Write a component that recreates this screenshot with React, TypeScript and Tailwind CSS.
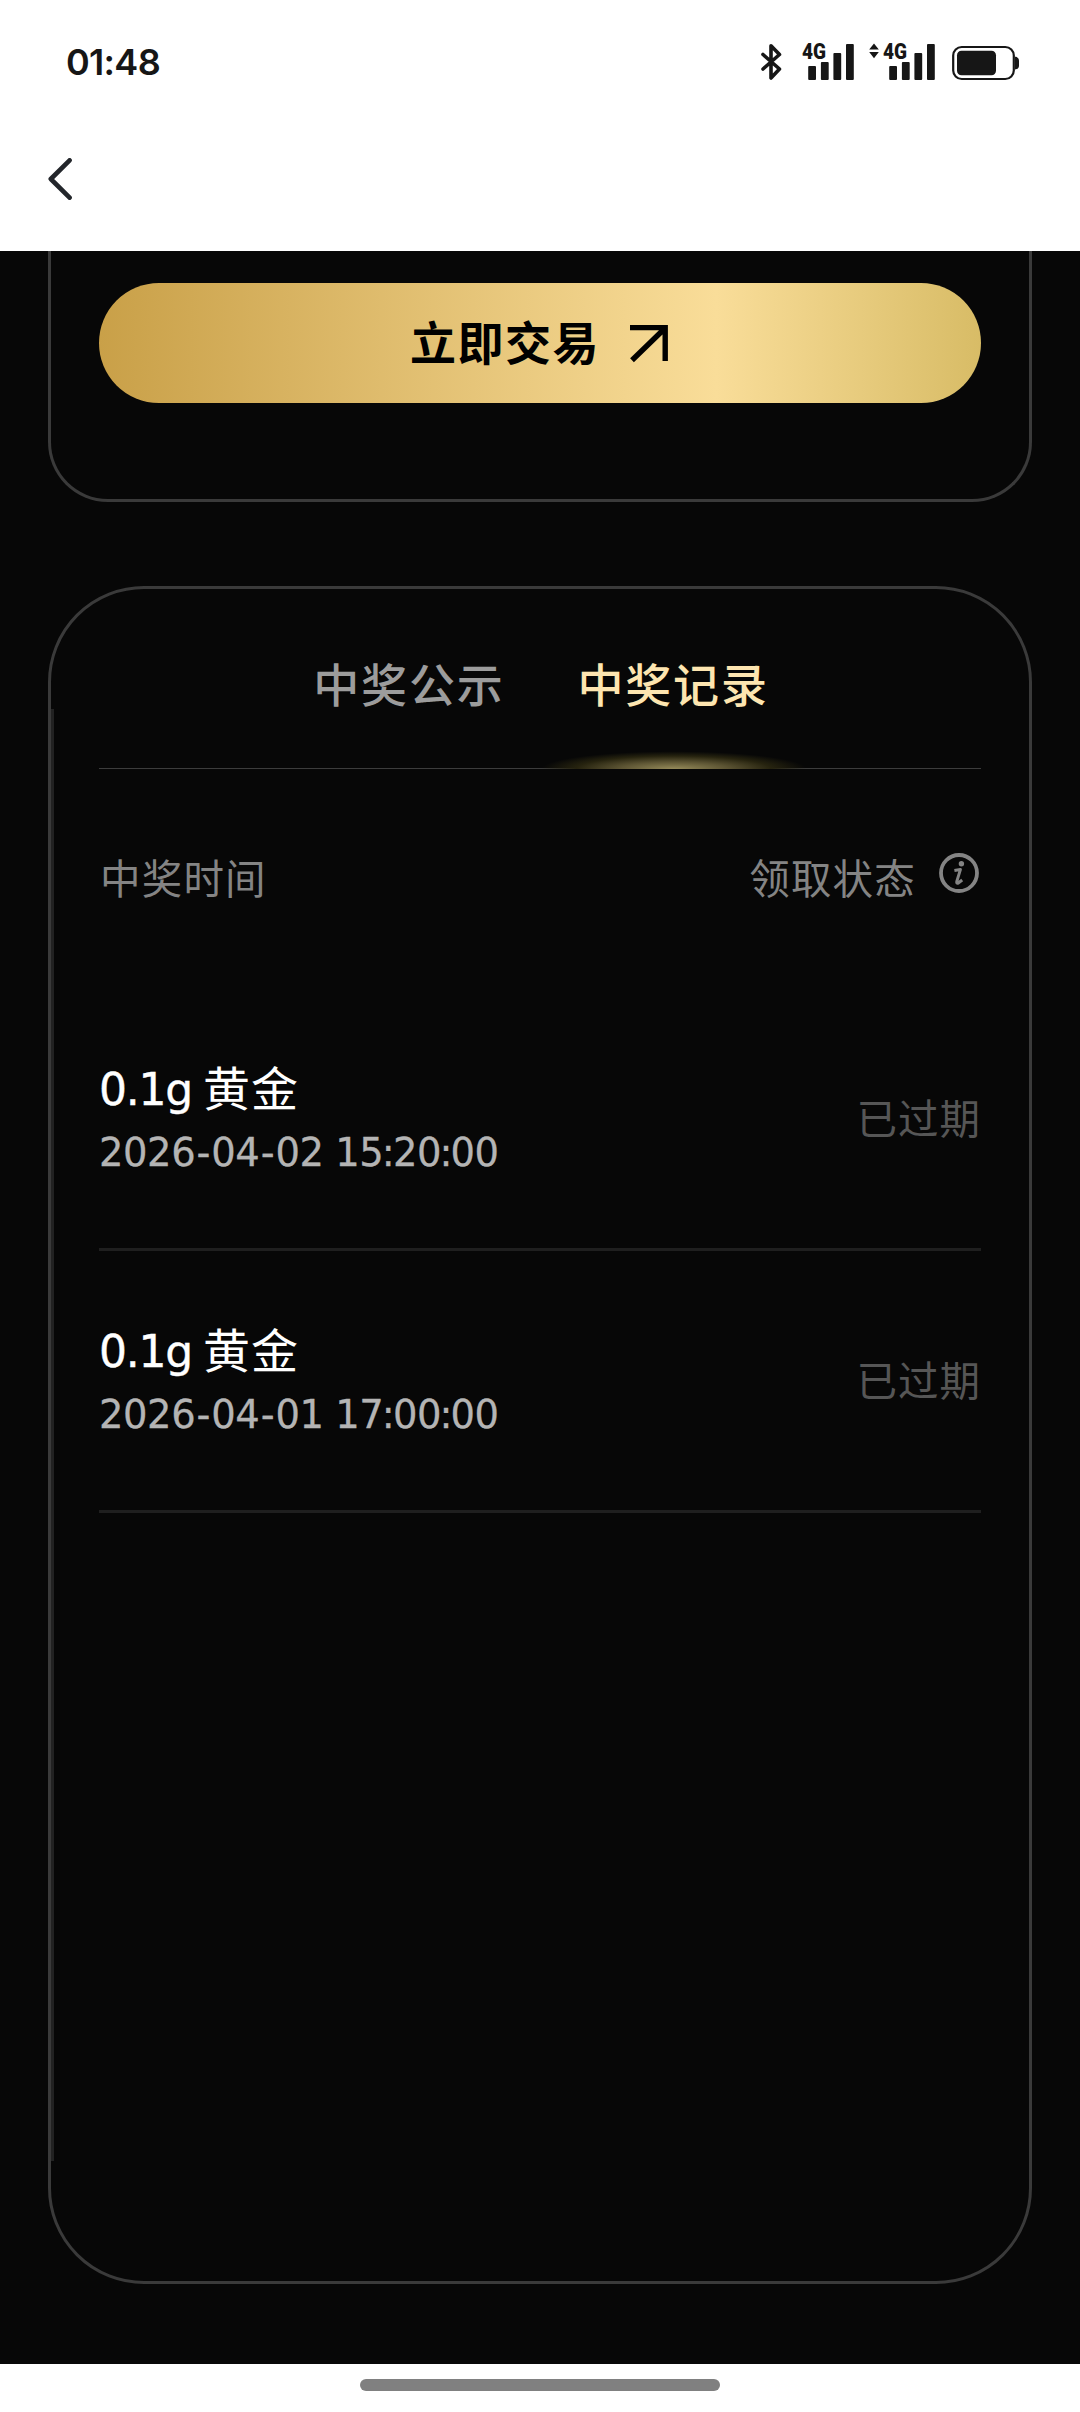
import React from "react";

const CJK = "font-['Noto_Sans_CJK_SC',sans-serif]";
const LATIN = "font-['DejaVu_Sans','Noto_Sans_CJK_SC',sans-serif]";

const records = [
  { amount: "0.1g", name: "黄金", date: ["2026", "04", "02"], clock: ["15", "20", "00"], status: "已过期" },
  { amount: "0.1g", name: "黄金", date: ["2026", "04", "01"], clock: ["17", "00", "00"], status: "已过期" },
];

function BluetoothIcon() {
  return (
    <svg width="22" height="38" viewBox="0 0 22 38" fill="none" stroke="#161616" strokeWidth="3.6" strokeLinejoin="round" strokeLinecap="round">
      <path d="M3 11.5 L19.5 26 L11 35 V2.8 L19.5 11.5 L3 26" />
    </svg>
  );
}

function SignalIcon() {
  return (
    <svg className="overflow-visible" width="54" height="38" viewBox="0 0 54 38" fill="#161616">
      <text x="0" y="16" fontFamily="Roboto, sans-serif" fontWeight="900" fontSize="22" textLength="24" lengthAdjust="spacingAndGlyphs">4G</text>
      <rect x="6.2" y="23" width="7.8" height="14" rx="1" />
      <rect x="18.9" y="19" width="7.8" height="18" rx="1" />
      <rect x="31.4" y="10" width="7.8" height="27" rx="1" />
      <rect x="44" y="1" width="7.8" height="36" rx="1" />
    </svg>
  );
}

function DataArrows() {
  return (
    <svg width="10" height="38" viewBox="0 0 10 38" fill="#161616">
      <path d="M5 0.4 L9.8 6.6 H0.2 Z M5 15.2 L0.2 9 H9.8 Z" />
    </svg>
  );
}

function BatteryIcon() {
  return (
    <svg width="68" height="36" viewBox="0 0 68 36" fill="none">
      <rect x="1.2" y="2" width="60.6" height="32" rx="8.5" stroke="#161616" strokeWidth="2.2" />
      <rect x="5" y="5.8" width="39" height="24.4" rx="4.5" fill="#161616" />
      <path d="M63 11.8 c2.6 0 4 1.6 4 4 v4.6 c0 2.4 -1.4 4 -4 4 Z" fill="#161616" />
    </svg>
  );
}

function StatusBar() {
  return (
    <div className="flex h-[124px] items-center justify-between pl-[66px] pr-[60px]">
      <span className="text-[36px] font-semibold leading-none tracking-[-0.7px] text-[#161616] font-['Inter',sans-serif]">01:48</span>
      <div className="flex h-[38px] items-center">
        <BluetoothIcon />
        <div className="ml-[20px]"><SignalIcon /></div>
        <div className="ml-[13px]"><DataArrows /></div>
        <div className="ml-[4px]"><SignalIcon /></div>
        <div className="ml-[15px] pt-[2px]"><BatteryIcon /></div>
      </div>
    </div>
  );
}

function NavBar() {
  return (
    <div className="flex h-[127px] items-start pl-[45px] pt-[34px]">
      <svg width="30" height="42" viewBox="0 0 30 42" fill="none" stroke="#23262b" strokeWidth="4.6" strokeLinecap="round" strokeLinejoin="round">
        <path d="M24.6 2.3 L5.8 21 L24.6 39.7" />
      </svg>
    </div>
  );
}

function InfoIcon() {
  return (
    <svg width="42" height="42" viewBox="0 0 42 42" fill="none">
      <circle cx="21" cy="21" r="18" stroke="#848484" strokeWidth="3.8" />
      <circle cx="23.4" cy="11.8" r="2.7" fill="#848484" />
      <path d="M16.4 18.6 L22.4 17.6 L18.8 29.4 Q18.2 32 20.6 30.8 L24.2 28" stroke="#848484" strokeWidth="3" strokeLinejoin="round" />
    </svg>
  );
}

/* Date and clock with widened hyphens and tightened colons. */
function Timestamp({ date, clock }: { date: string[]; clock: string[] }) {
  return (
    <span className="[-webkit-text-stroke:0.3px_currentColor]">
      {date.map((part, i) => (
        <React.Fragment key={i}>
          {i > 0 && <span className="mx-[1.3px]">-</span>}
          {part}
        </React.Fragment>
      ))}{" "}
      {clock.map((part, i) => (
        <React.Fragment key={i}>
          {i > 0 && <span className="-mx-[1.5px]">:</span>}
          {part}
        </React.Fragment>
      ))}
    </span>
  );
}

export default function App() {
  return (
    <div className={`flex h-[2412px] w-[1080px] flex-col overflow-hidden bg-white ${CJK}`}>
      <header>
        <StatusBar />
        <NavBar />
      </header>

      <main className="flex h-[2113px] flex-col bg-[#070707] px-[48px]">
        <section className="h-[251px] rounded-b-[60px] border-x-[3px] border-b-[3px] border-[#3a3a3a] px-[48px] pt-[32px]">
          <button className="flex h-[120px] w-full items-center justify-center gap-[24px] rounded-full bg-[linear-gradient(90deg,#c9a048_0%,#f9dd99_70%,#d8bc66_100%)] text-black">
            <span className="-mt-[6px] pl-[2px] text-[46px] font-bold leading-[72px] tracking-[1.5px]">立即交易</span>
            <svg width="48" height="48" viewBox="0 0 48 48" fill="none" stroke="#000" strokeWidth="5.4">
              <path d="M6 8.6 H41.2 V42 M41 9.2 L8 41.2" />
            </svg>
          </button>
        </section>

        <section className="relative mt-[84px] h-[1698px] rounded-[96px] border-[3px] border-[#3a3a3a] px-[48px]">
          <div className="absolute left-0 top-[120px] h-[1452px] w-[3px] bg-[#222222]" />

          <div className="flex h-[180px] justify-center gap-[72px] border-b border-[#3c3c3c] text-[46px] font-medium leading-[72px] tracking-[1.8px]">
            <button className="flex items-start pl-[2px] pt-[57px] text-[#9c9c9c]">中奖公示</button>
            <button className="relative flex items-start pl-px pt-[57px] text-[#fde5b0]">
              中奖记录
              <span className="absolute -bottom-px left-[-38px] h-[18px] w-[270px] bg-[radial-gradient(ellipse_50%_100%_at_50%_100%,#968b5a_0%,#5c5433_40%,#26230f_72%,transparent_98%)]" />
            </button>
          </div>

          <div className="flex h-[220px] items-start justify-between pt-[76px] text-[40.5px] leading-[63px] tracking-[1.2px] text-[#848484]">
            <span className="pl-px">中奖时间</span>
            <span className="flex items-start gap-[23px]">
              领取状态
              <span className="-ml-px mr-px pt-[7px]"><InfoIcon /></span>
            </span>
          </div>

          {records.map((r) => (
            <div key={r.date.join("-")} className="flex h-[262px] items-center justify-between border-b-[3px] border-[#1f1f1f]">
              <div className="flex flex-col">
                <div className="flex h-[64px] items-center text-white">
                  <span className={`pt-[7px] text-[44px] tracking-[-1.2px] [-webkit-text-stroke:0.4px_currentColor] ${LATIN}`}>{r.amount}</span>
                  <span className="-mt-[2px] ml-[11px] text-[47px] leading-[64px] tracking-[0.8px]">{r.name}</span>
                </div>
                <div className={`flex h-[64px] items-center pt-[5px] text-[38.5px] tracking-[-0.45px] text-[#b4b4b4] ${LATIN}`}>
                  <Timestamp date={r.date} clock={r.clock} />
                </div>
              </div>
              <span className="-mt-[5px] text-[40.5px] leading-[63px] tracking-[1px] text-[#565656]">{r.status}</span>
            </div>
          ))}
        </section>
      </main>

      <footer className="flex h-[48px] justify-center pt-[15px]">
        <div className="h-[12px] w-[360px] rounded-full bg-[#808080]" />
      </footer>
    </div>
  );
}
